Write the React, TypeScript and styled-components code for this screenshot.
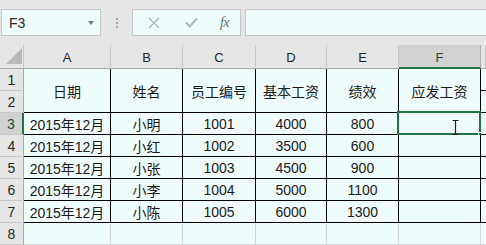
import React from "react";
import styled, { createGlobalStyle, css } from "styled-components";

const GlobalStyle = createGlobalStyle`
    html, body {
        margin: 0;
        padding: 0;
        background: #e6e6e6;
        overflow: hidden;
    }
    * {
        box-sizing: border-box;
    }
`;

const CELL_BG = "#effcfc";
const GREEN = "#217346";
const GRID = "#d4d4d4";

const Window = styled.div`
    width: 486px;
    height: 245px;
    background: #e6e6e6;
    font-family: "Liberation Sans", "Noto Sans CJK SC", sans-serif;
    color: #1a1a1a;
    overflow: hidden;
`;

const FormulaBar = styled.div`
    height: 45px;
    display: flex;
    align-items: flex-start;
    padding: 9px 0 0 1px;
`;

const NameBox = styled.div`
    width: 100px;
    height: 27px;
    background: ${CELL_BG};
    border: 1px solid #c6c6c6;
    display: flex;
    align-items: center;
    justify-content: space-between;
    padding: 0 6px 0 7px;
    font-size: 14px;
    color: #2a2a2a;
`;

const Caret = styled.span`
    width: 0;
    height: 0;
    border-left: 3.5px solid transparent;
    border-right: 3.5px solid transparent;
    border-top: 4px solid #7a7a7a;
`;

const Dots = styled.div`
    width: 31px;
    height: 27px;
    display: flex;
    flex-direction: column;
    align-items: center;
    justify-content: center;
    gap: 2px;

    span {
        width: 2px;
        height: 2px;
        background: #a8a8a8;
    }
`;

const ButtonsBox = styled.div`
    width: 109px;
    height: 27px;
    background: ${CELL_BG};
    border: 1px solid #c6c6c6;
    display: grid;
    grid-template-columns: 38px 36px 1fr;
    align-items: center;
    justify-items: center;
    padding-left: 2px;
`;

const Fx = styled.span`
    font-family: "Liberation Serif", serif;
    font-style: italic;
    font-size: 14px;
    color: #6a6a6a;
    letter-spacing: -0.5px;
`;

const FormulaInput = styled.div`
    flex: 1;
    margin-left: 4px;
    height: 27px;
    background: ${CELL_BG};
    border: 1px solid #c6c6c6;
    border-right: none;
`;

const Sheet = styled.div`
    display: grid;
    grid-template-columns: 24px 87px 72px 73px 71px 72px 82px 1fr;
    grid-template-rows: 24px repeat(8, 22px);
`;

const Corner = styled.div`
    background: #e6e6e6;
    border-right: 1px solid #c6c6c6;
    border-bottom: 1px solid #ababab;
    position: relative;

    &::after {
        content: "";
        position: absolute;
        right: 1px;
        bottom: 4px;
        border-left: 16px solid transparent;
        border-bottom: 16px solid #b9b9b9;
    }
`;

const ColHead = styled.div<{ $active?: boolean }>`
    background: ${({ $active }) => ($active ? "#d2d2d2" : "#e6e6e6")};
    border-right: 1px solid ${({ $active }) => ($active ? "#ababab" : "#c8c8c8")};
    border-bottom: ${({ $active }) => ($active ? `2px solid ${GREEN}` : "1px solid #ababab")};
    display: flex;
    align-items: center;
    justify-content: center;
    padding-top: 2px;
    font-size: 13px;
    color: ${({ $active }) => ($active ? "#1f4f36" : "#262626")};
`;

const RowHead = styled.div<{ $active?: boolean }>`
    background: ${({ $active }) => ($active ? "#d2d2d2" : "#e6e6e6")};
    border-right: ${({ $active }) => ($active ? `2px solid ${GREEN}` : "1px solid #ababab")};
    border-bottom: 1px solid #c8c8c8;
    display: flex;
    align-items: center;
    justify-content: center;
    font-size: 14px;
    color: ${({ $active }) => ($active ? "#1f4f36" : "#262626")};
`;

const Cell = styled.div<{ $black?: boolean; $span?: number; $noRight?: boolean }>`
    position: relative;
    background: ${CELL_BG};
    border-right: 1px solid ${({ $black }) => ($black ? "#000" : GRID)};
    border-bottom: 1px solid ${({ $black }) => ($black ? "#000" : GRID)};
    display: flex;
    align-items: center;
    justify-content: center;
    font-size: 14px;
    white-space: nowrap;
    ${({ $span }) =>
        $span &&
        css`
            grid-row: span ${$span};
        `}
    ${({ $noRight }) =>
        $noRight &&
        css`
            border-right: none;
        `}
`;

const Selection = styled.div`
    position: absolute;
    left: -2px;
    top: -2px;
    right: -1px;
    bottom: -1px;
    border: 2px solid ${GREEN};
    pointer-events: none;
`;

const FillHandle = styled.div`
    position: absolute;
    right: -4px;
    bottom: -4px;
    width: 6px;
    height: 6px;
    background: ${GREEN};
    border: 1px solid ${CELL_BG};
`;

const Cursor = styled.svg`
    position: absolute;
    left: 53px;
    top: 7px;
`;

const columns = ["A", "B", "C", "D", "E", "F"];
const headers = ["日期", "姓名", "员工编号", "基本工资", "绩效", "应发工资"];
const rows = [
    ["2015年12月", "小明", "1001", "4000", "800", ""],
    ["2015年12月", "小红", "1002", "3500", "600", ""],
    ["2015年12月", "小张", "1003", "4500", "900", ""],
    ["2015年12月", "小李", "1004", "5000", "1100", ""],
    ["2015年12月", "小陈", "1005", "6000", "1300", ""],
];

const App = () => {
    return (
        <Window>
            <GlobalStyle />
            <FormulaBar>
                <NameBox>
                    F3
                    <Caret />
                </NameBox>
                <Dots>
                    <span />
                    <span />
                    <span />
                </Dots>
                <ButtonsBox>
                    <svg width="12" height="12" viewBox="0 0 12 12">
                        <path d="M1 1 L11 11 M11 1 L1 11" stroke="#b4b4b4" strokeWidth="1.4" />
                    </svg>
                    <svg width="13" height="11" viewBox="0 0 13 11">
                        <path d="M1 5.5 L4.8 9.5 L12 1.5" stroke="#b4b4b4" strokeWidth="2" fill="none" />
                    </svg>
                    <Fx>fx</Fx>
                </ButtonsBox>
                <FormulaInput />
            </FormulaBar>

            <Sheet>
                <Corner />
                {columns.map((c) => (
                    <ColHead key={c} $active={c === "F"}>
                        {c}
                    </ColHead>
                ))}
                <ColHead />

                {/* rows 1-2: merged titles */}
                <RowHead>1</RowHead>
                {headers.map((h) => (
                    <Cell key={h} $black $span={2}>
                        {h}
                    </Cell>
                ))}
                <Cell $black $noRight />
                <RowHead>2</RowHead>
                <Cell $black $noRight />

                {rows.map((r, i) => (
                    <React.Fragment key={i}>
                        <RowHead $active={i === 0}>{i + 3}</RowHead>
                        {r.map((v, j) => (
                            <Cell key={j} $black>
                                {v}
                                {i === 0 && j === 5 && (
                                    <>
                                        <Selection />
                                        <FillHandle />
                                        <Cursor width="7" height="15" viewBox="0 0 7 15">
                                            <path
                                                d="M0.5 0.5 H6.5 M3.5 0.5 V14.5 M0.5 14.5 H6.5"
                                                stroke="#2b1b1b"
                                                strokeWidth="1.2"
                                                fill="none"
                                            />
                                        </Cursor>
                                    </>
                                )}
                            </Cell>
                        ))}
                        <Cell $black $noRight />
                    </React.Fragment>
                ))}

                <RowHead>8</RowHead>
                {columns.map((c) => (
                    <Cell key={c} />
                ))}
                <Cell $noRight />
            </Sheet>
        </Window>
    );
};

export default App;
